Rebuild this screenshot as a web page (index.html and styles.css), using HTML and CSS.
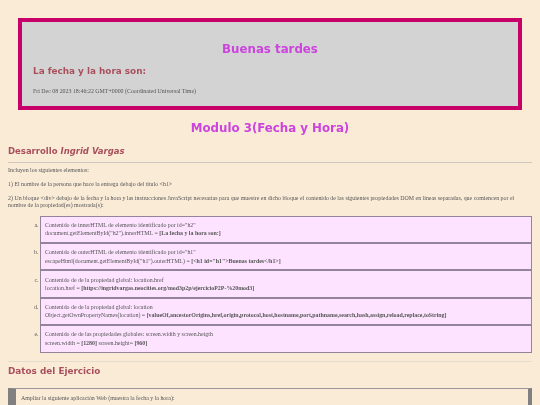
FILE: index.html
```html
<!DOCTYPE html>
<html lang="es">
<head>
    <meta charset="UTF-8">
    <title>Modulo 3(Fecha y Hora)</title>
    <link rel="stylesheet" href="styles.css">
</head>
<body>
    <!-- cabecera con el saludo -->
    <div class="saludo">
        <h1>Buenas tardes</h1>
        <h2>La fecha y la hora son:</h2>
        <p>Fri Dec 08 2023 18:46:22 GMT+0000 (Coordinated Universal Time)</p>
    </div>
    <h1 class="modulo">Modulo 3(Fecha y Hora)</h1>
    <h2 class="autor">Desarrollo <em>Ingrid Vargas</em></h2>
    <hr>
    <p>Incluyen los siguientes elementos:</p>
    <p>1) El nombre de la persona que hace la entrega debajo del título &lt;h1&gt;</p>
    <p>2) Un bloque &lt;div&gt; debajo de la fecha y la hora y las instrucciones JavaScript necesarias para que muestre en dicho bloque el contenido de las siguientes propiedades DOM en líneas separadas, que comiencen por el nombre de la propiedad(es) mostrada(s):</p>
    <ol class="lista" type="a">
        <li>Contenido de innerHTML de elemento identificado por id="h2"<br>document.getElementById("h2").innerHTML = <b>[La fecha y la hora son:]</b></li>
        <li>Contenido de outerHTML de elemento identificado por id="h1"<br>escapeHtml(document.getElementById("h1").outerHTML) = <b>[&lt;h1 id="h1"&gt;Buenas tardes&lt;/h1&gt;]</b></li>
        <li>Contenido de de la propiedad global: location.href<br>location.href = <b>[https://ingridvargas.neocities.org/mod3p2p/ejercicioP2P-%20mod3]</b></li>
        <li>Contenido de de la propiedad global: location<br>Object.getOwnPropertyNames(location) = <b>[valueOf,ancestorOrigins,href,origin,protocol,host,hostname,port,pathname,search,hash,assign,reload,replace,toString]</b></li>
        <li>Contenido de de las propiedades globales: screen.width y screen.heigth<br>screen.width = <b>[1280]</b> screen.height= <b>[960]</b></li>
    </ol>
    <hr class="claro">
    <h2>Datos del Ejercicio</h2>
    <div class="datos">
        <p>Ampliar la siguiente aplicación Web (muestra la fecha y la hora):</p>
    </div>
</body>
</html>
```

FILE: styles.css
```css
/* pagina completa */
html, body {
    height: 405px;
    overflow: hidden;
}
html {
    background: #faebd7;
}
body {
    margin: 0;
    padding: 18px 8px 0;
    box-sizing: border-box;
    color: #555;
    font-family: "Liberation Serif", serif;
    font-size: 5.9px;
    line-height: 7px;
    filter: blur(0.3px);
}
h1, h2 {
    font-family: "DejaVu Sans", sans-serif;
    font-weight: bold;
}
h1 {
    margin: 0;
    font-size: 11.8px;
    line-height: 14px;
    text-align: center;
    color: #cc44dd;
}
h2 {
    margin: 0;
    font-size: 8.86px;
    line-height: 11px;
    color: #a94f5c;
}
.autor {
    font-size: 8.5px;
}
p {
    margin: 0 0 7px;
}
hr {
    height: 1px;
    margin: 5.5px 0 3.5px;
    border: 0;
    background: #cfc7bd;
}
/* caja del saludo */
.saludo {
    margin: 0 10px;
    padding: 20px 11px 0;
    height: 92px;
    box-sizing: border-box;
    border: 4px solid #c60068;
    background: #d3d3d3;
}
.saludo h2 {
    margin-top: 9.5px;
}
.saludo p {
    margin: 11px 0 0;
}
.modulo {
    margin: 11px 0 10.5px;
}
/* lista de propiedades */
.lista {
    margin: 0;
    padding-left: 32px;
}
.lista li {
    padding: 4.3px 4px;
    border: 1px solid #94849a;
    background: #fde3ff;
    line-height: 8.4px;
}
.claro {
    margin: 8px 0 4.5px;
    background: #e6dccd;
}
/* caja de datos del ejercicio */
.datos {
    margin-top: 10.5px;
    padding: 6.5px 5px 10px;
    border: 1px solid #999;
    border-left: 8px solid #808080;
    border-right: 4px solid #808080;
}
```
